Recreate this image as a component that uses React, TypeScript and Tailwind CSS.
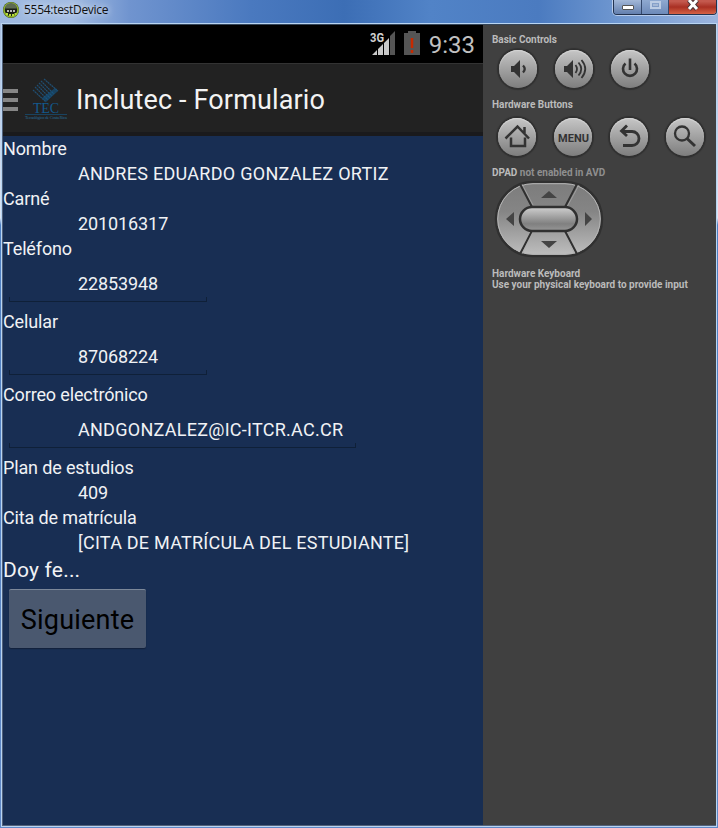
import type { ReactNode } from "react";

function Round({ children }: { children: ReactNode }) {
  return (
    <div className="h-[38px] w-[38px] shrink-0 rounded-full bg-linear-to-b from-[#c6c6c6] to-[#7e7e7e] shadow-[0_0_1px_2px_#303030,inset_0_1px_1px_#d6d6d6]">
      <svg viewBox="0 0 38 38" className="h-[38px] w-[38px]" fill="none" stroke="#333" strokeWidth="2.3">
        {children}
      </svg>
    </div>
  );
}

function Label({ children }: { children: ReactNode }) {
  return <div className="h-[25px] text-[18px] leading-[26px] tracking-[-0.14px]">{children}</div>;
}

function Value({ children, spacing = "tracking-[-0.1px]" }: { children: ReactNode; spacing?: string }) {
  return <div className={`h-[25px] pl-[75px] text-[18px] leading-[26px] ${spacing}`}>{children}</div>;
}

function Field({ children, width, spacing = "tracking-[-0.1px]" }: { children: ReactNode; width: string; spacing?: string }) {
  return (
    <div className="h-[48px] pl-[6px]">
      <div className={`flex h-[41px] flex-col justify-between ${width}`}>
        <div className={`pt-[10px] pl-[69px] text-[18px] leading-[26px] ${spacing}`}>{children}</div>
        <div className="h-[5px] border-x border-b border-[#0f2038]" />
      </div>
    </div>
  );
}

function TitleBar() {
  return (
    <header className="flex h-[23px] shrink-0 items-start justify-between bg-[linear-gradient(90deg,#9db8df_0%,#a3bce2_10%,#7094cf_18%,#4a79bf_35%,#3c6eb5_48%,#5183c7_60%,#4b7bc0_75%,#6f97d0_86%,#9cb5de_100%)] pr-[1px]">
      <div className="flex h-[20px] items-center">
        <svg viewBox="0 0 18 18" className="ml-[2px] h-[18px] w-[18px]">
          <circle cx="9" cy="9" r="8" fill="#263020" />
          <circle cx="9" cy="9" r="7" fill="#1b1f17" stroke="#91b72e" strokeWidth="1.6" />
          <path d="M3 7.500a6 5.500 0 0 1 12 0z" fill="#5d6b53" />
          <path d="M5 10h2M8 10h2M11 10h2" stroke="#eee" strokeWidth="1.4" />
          <path d="M4 13h2M7 14h2M10 14h2M12.5 13h2" stroke="#b8dd3a" strokeWidth="2" />
        </svg>
        <span className="ml-[4px] font-['Open_Sans','Noto_Sans',sans-serif] text-[12px] leading-[20px] tracking-[-0.29px] whitespace-nowrap text-[#111] [text-shadow:0_0_7px_#fff]">5554:testDevice</span>
      </div>
      <div className="flex h-[15px] w-[104px] overflow-hidden rounded-b-[4px] border-x border-b border-[#23334f] shadow-[0_0_0_1px_#b9cdec]">
        <div className="flex w-[28px] justify-center border-r border-[#34496d] bg-linear-to-b from-[#a3b8d8] to-[#637fae] pt-[5px]">
          <div className="h-[5px] w-[12px] rounded-[1px] border border-[#555] bg-white" />
        </div>
        <div className="flex w-[27px] justify-center border-r border-[#34496d] bg-linear-to-b from-[#8fa9d0] to-[#6d8ab9] pt-[1px]">
          <div className="flex h-[8px] w-[11px] border-2 border-[#bccce4] p-[1px]"><div className="h-[2px] flex-1 bg-[#a5b8d5]" /></div>
        </div>
        <div className="flex flex-1 justify-center bg-linear-to-b from-[#c4594e] from-10% via-[#a92f23] via-50% to-[#d56144]">
          <svg viewBox="0 0 14 11" className="h-[11px] w-[14px]">
            <path d="M3 0 11 9M11 0 3 9" stroke="#4a3438" strokeWidth="5" />
            <path d="M3 0 11 9M11 0 3 9" stroke="#fff" strokeWidth="3" />
          </svg>
        </div>
      </div>
    </header>
  );
}

function StatusBar() {
  return (
    <div className="flex h-[38px] items-center justify-end bg-black pr-[8px] text-[#c1c1c1]">
      <svg viewBox="0 0 52 28" className="h-[28px] w-[52px] font-[Roboto,sans-serif]">
        <path d="M2 25 7 20v5zM8 25v-6l5-5v11zM14 25V13l5-5v17z" fill="#c9c9c9" />
        <path d="M20 25V6l5-5v24z" fill="#555" />
        <text x="0" y="11.5" fontSize="12.500" fontWeight="700" fill="#d0d0d0" stroke="#000" strokeWidth="2" paintOrder="stroke" textLength="14" lengthAdjust="spacingAndGlyphs">3G</text>
        <path d="M34 3h4V1h8v2h4v22H34z" fill="#555" />
        <path d="M42 8v10M42 20v3" stroke="#c62a00" strokeWidth="2.5" />
      </svg>
      <span className="mt-[2px] ml-[7px] text-[24px] leading-[38px]">9:33</span>
    </div>
  );
}

function ActionBar() {
  return (
    <div className="flex h-[73px] shrink-0 items-center border-t border-b-4 border-t-[#333] border-b-[#1a1a1c] bg-[#222]">
      <div className="mt-[4px] flex w-[15px] flex-col gap-[5px]">
        <div className="h-[4px] bg-[#868686]" />
        <div className="h-[4px] bg-[#868686]" />
        <div className="h-[4px] bg-[#868686]" />
      </div>
      <svg viewBox="0 0 44 44" className="mt-[1px] ml-[6px] h-[44px] w-[44px]">
        <path d="m9 13 13 12M11 10l13 13M13 8l13 13M15 6l13 13M17 4l13 13M20 2l14 12" stroke="#205a87" strokeWidth="1.2" strokeDasharray="2 .5" opacity=".8" />
        <path d="m18 21 4 4 12-11-3-3z" fill="#145483" opacity=".65" />
        <text x="9" y="36" fontFamily="Liberation Serif, serif" fontSize="14" fill="#13598d" textLength="26">TEC</text>
        <path d="M1 37.5h42" stroke="#174b70" strokeWidth=".8" />
        <text x="1" y="42" fontFamily="Liberation Serif, serif" fontSize="4.5" fill="#276b98" textLength="42">Tecnológico de Costa Rica</text>
      </svg>
      <h1 className="mt-[4px] ml-[8px] text-[27px] leading-[32px] tracking-[0.14px] whitespace-nowrap text-[#f3f3f3]">Inclutec - Formulario</h1>
    </div>
  );
}

function Dpad() {
  return (
    <svg viewBox="0 0 112 80" className="h-[80px] w-[112px]">
      <defs>
        <linearGradient id="pad" x1="0" y1="0" x2="0" y2="1"><stop stopColor="#7c7c7c" /><stop offset=".4" stopColor="#858585" /><stop offset="1" stopColor="#bfbfbf" /></linearGradient>
        <linearGradient id="key" x1="0" y1="0" x2="0" y2="1"><stop stopColor="#d0d0d0" /><stop offset=".7" stopColor="#808080" /><stop offset="1" stopColor="#979797" /></linearGradient>
      </defs>
      <rect x="4" y="3" width="106" height="74" rx="37" fill="url(#pad)" stroke="#303030" strokeWidth="2.5" />
      <rect x="5.7" y="4.7" width="102.6" height="70.6" rx="35.3" fill="none" stroke="#b5b5b5" strokeWidth="1" />
      <path d="m28 5 12 23M85 5 73 28M28 75l12-23M85 75 73 52" stroke="#303030" strokeWidth="2" />
      <path d="m30 5 11 21M87 6 75 28M30 75l11-22M83 75 71 53" stroke="#aaa" strokeWidth=".7" />
      <rect x="28" y="28" width="57" height="24" rx="12" fill="url(#key)" stroke="#303030" strokeWidth="2.5" />
      <path d="m57 12 8 7H49zM57 69l8-7H49zM14 40l8-7v14zM100 40l-7-7v14z" fill="#444" />
    </svg>
  );
}

function Controls() {
  return (
    <aside className="flex min-w-0 flex-1 flex-col bg-[#404040] pt-[9px] pl-[9px] text-[10px] leading-[12px] font-bold text-[#bbb]">
      <div className="h-[12px] tracking-[-0.04px]">Basic Controls</div>
      <div className="mt-[4px] ml-[7px] flex gap-[18px]">
        <Round><path d="M12 16h3l6-6v18l-6-6h-3z" fill="#333" stroke="none" /><path d="M24 15.500q3.500 3.500 0 7" /></Round>
        <Round><path d="M9 16h3l6-6v18l-6-6H9z" fill="#333" stroke="none" /><path d="M20.500 15q3 4 0 8M23.500 12.5q5.500 6.500 0 13M26.500 10q7.500 9 0 18" strokeWidth="1.8" /></Round>
        <Round><path d="M19 8.500V20M14.500 13.500a7 7 0 1 0 9 0" strokeWidth="2.6" /></Round>
      </div>
      <div className="mt-[11px] h-[12px]">Hardware Buttons</div>
      <div className="mt-[7px] ml-[6px] flex gap-[18px]">
        <Round><path d="m7.500 20.500 12-12L31 20.500M13 19.500V28h14v-8.500M26.500 9v6" strokeWidth="2.5" /></Round>
        <Round><text x="4" y="24" fill="#333" stroke="none" fontSize="11" fontWeight="700" textLength="31">MENU</text></Round>
        <Round><path d="m17 7.500-5.500 5.500 5.500 5M12 13.500h10a6.500 6.500 0 0 1 0 14h-9" strokeWidth="2.8" /></Round>
        <Round><circle cx="16" cy="15.500" r="7" /><path d="m21 20.500 8 7.500" strokeWidth="3" /></Round>
      </div>
      <div className="mt-[11px] h-[12px]">DPAD <span className="text-[#8f8f8f]">not enabled in AVD</span></div>
      <Dpad />
      <div className="mt-[9px]">Hardware Keyboard</div>
      <div className="-mt-[1px] whitespace-nowrap">Use your physical keyboard to provide input</div>
    </aside>
  );
}

export default function App() {
  return (
    <div className="flex h-[828px] w-[718px] flex-col overflow-hidden bg-[#5583c4] font-[Roboto,sans-serif]">
      <TitleBar />
      <div className="flex min-h-0 flex-1 bg-[linear-gradient(180deg,#a9bee0_0,#dce6f4_195px,#4d7fc2_202px,#5f88c6_100%)] px-[1px] pb-[1px]">
        <div className="flex min-w-0 flex-1 border border-[#b9d5f2]">
          <div className="flex w-full border-t border-b border-l border-t-[#344559] border-b-[#52617a] border-l-[#52617a]">
            <main className="flex w-[480px] shrink-0 flex-col bg-[#182e53] text-[#f0f2f5]">
              <StatusBar />
              <ActionBar />
              <Label>Nombre</Label>
              <Value spacing="tracking-[0.29px]">ANDRES EDUARDO GONZALEZ ORTIZ</Value>
              <Label>Carné</Label>
              <Value>201016317</Value>
              <Label>Teléfono</Label>
              <Field width="w-[198px]">22853948</Field>
              <Label>Celular</Label>
              <Field width="w-[198px]">87068224</Field>
              <Label>Correo electrónico</Label>
              <Field width="w-[347px]" spacing="tracking-[0.27px]">ANDGONZALEZ@IC-ITCR.AC.CR</Field>
              <Label>Plan de estudios</Label>
              <Value>409</Value>
              <Label>Cita de matrícula</Label>
              <Value spacing="tracking-[0.24px]">[CITA DE MATRÍCULA DEL ESTUDIANTE]</Value>
              <div className="h-[34px] text-[21px] leading-[30px] tracking-[0.2px]">Doy fe...</div>
              <button className="ml-[6px] h-[59px] w-[137px] rounded-[2px] border-t border-[#7c8899] bg-[#4a586f] text-[27px] leading-[60px] tracking-[0.2px] text-black shadow-[0_1px_1px_#12213b]">Siguiente</button>
            </main>
            <Controls />
          </div>
        </div>
      </div>
    </div>
  );
}
